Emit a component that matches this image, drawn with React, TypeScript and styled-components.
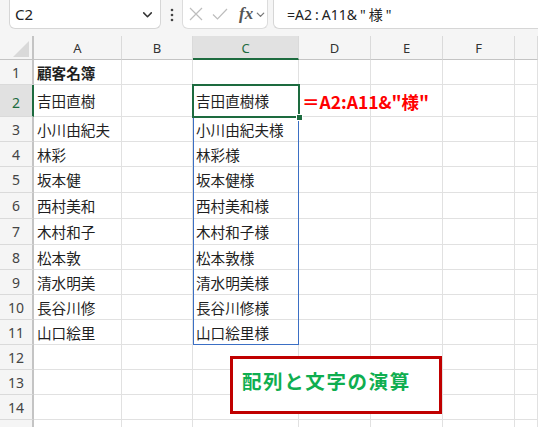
import React from "react";
import styled, { createGlobalStyle } from "styled-components";

const Global = createGlobalStyle`
  * { box-sizing: border-box; }
  html, body { margin: 0; padding: 0; background: #ffffff; overflow: hidden; }
  body { font-family: "Noto Sans", "Noto Sans CJK JP", sans-serif; }
`;

const Page = styled.div`
  width: 538px;
  height: 427px;
  background: #f5f5f5;
  overflow: hidden;
`;

const Toolbar = styled.div`
  height: 36px;
  display: flex;
  align-items: flex-start;
  padding-left: 9px;
`;

const NameBox = styled.div`
  width: 152px;
  height: 29px;
  background: #fff;
  border: 1px solid #d6d6d6;
  border-top: none;
  border-radius: 0 0 6px 6px;
  display: flex;
  align-items: center;
  justify-content: space-between;
  padding: 0 6px 0 5px;
  font-family: "Noto Sans", sans-serif;
  font-size: 15px;
  color: #222;
`;

const Kebab = styled.div`
  width: 21px;
  height: 29px;
  display: flex;
  align-items: center;
  justify-content: center;
`;

const FxBox = styled.div`
  width: 86px;
  height: 29px;
  background: #fff;
  border: 1px solid #dcdcdc;
  border-top: none;
  border-radius: 0 0 6px 6px;
  display: flex;
  align-items: center;
  gap: 9px;
  padding-left: 6px;
`;

const FxLabel = styled.span`
  font-family: "Liberation Serif", serif;
  font-style: italic;
  font-weight: bold;
  font-size: 17px;
  color: #555;
  display: flex;
  align-items: center;
  gap: 2px;
  margin-left: 2px;
`;

const FormulaBox = styled.div`
  flex: 1;
  height: 29px;
  margin-left: 5px;
  background: #fff;
  border: 1px solid #d6d6d6;
  border-top: none;
  border-right: none;
  border-radius: 0 0 0 6px;
  display: flex;
  align-items: center;
  padding-left: 13px;
  font-family: "Noto Sans", "Noto Sans CJK JP", sans-serif;
  font-size: 14px;
  color: #222;
  white-space: pre;
`;

const Wide = styled.span`
  margin: 0 3px;
`;

const Sheet = styled.div`
  position: relative;
  background: #fff;
`;

const COLS = "34px 88px 71px 106px 72px 72px 72px 1fr";

const Row = styled.div<{ $h: number }>`
  display: grid;
  grid-template-columns: ${COLS};
  height: ${(p) => p.$h}px;
`;

const Corner = styled.div`
  background: #f5f5f5;
  border-right: 2px solid #c4c4c4;
  border-bottom: 1px solid #c4c4c4;
  position: relative;
`;

const ColHead = styled.div<{ $active?: boolean }>`
  background: ${(p) => (p.$active ? "#e1e1e1" : "#f5f5f5")};
  border-right: 1px solid #dadada;
  border-bottom: ${(p) => (p.$active ? "2px solid #1d6b3f" : "1px solid #c4c4c4")};
  display: flex;
  align-items: center;
  justify-content: center;
  font-family: "Noto Sans", sans-serif;
  font-size: 13px;
  color: ${(p) => (p.$active ? "#1d6b3f" : "#333")};
  padding-top: 1px;
`;

const RowHead = styled.div<{ $active?: boolean }>`
  background: ${(p) => (p.$active ? "#e1e1e1" : "#f5f5f5")};
  border-right: ${(p) => (p.$active ? "2px solid #1d6b3f" : "2px solid #c4c4c4")};
  border-bottom: 1px solid #dadada;
  display: flex;
  align-items: center;
  justify-content: center;
  font-family: "Noto Sans", sans-serif;
  font-size: 14px;
  color: ${(p) => (p.$active ? "#1d6b3f" : "#444")};
  padding-top: ${(p) => (p.$active ? "4px" : "0")};
`;

const Cell = styled.div<{ $bold?: boolean }>`
  border-right: 1px solid #e1e1e1;
  border-bottom: 1px solid #e1e1e1;
  display: flex;
  align-items: center;
  padding-left: 3px;
  white-space: nowrap;
  overflow: visible;
  font-family: "Noto Sans CJK JP", "Noto Sans", sans-serif;
  font-size: 14.6px;
  font-weight: ${(p) => (p.$bold ? 700 : 400)};
  color: #1f1f1f;
  position: relative;
`;

const RedFormula = styled.span`
  position: absolute;
  left: 3px;
  top: 50%;
  transform: translateY(-50%);
  font-family: "Noto Sans CJK JP", sans-serif;
  font-weight: 700;
  font-size: 17.5px;
  color: #ff0000;
  z-index: 3;
`;

const Spill = styled.div`
  position: absolute;
  left: 193px;
  top: 49px;
  width: 106px;
  height: 260px;
  border: 1px solid #3b6fc4;
  pointer-events: none;
  z-index: 1;
`;

const Selected = styled.div`
  position: absolute;
  left: 192px;
  top: 48px;
  width: 108px;
  height: 34px;
  border: 2px solid #1d6b3f;
  pointer-events: none;
  z-index: 2;
`;

const Handle = styled.div`
  position: absolute;
  right: -5px;
  bottom: -5px;
  width: 7px;
  height: 7px;
  background: #1d6b3f;
  border: 1px solid #fff;
`;

const Callout = styled.div`
  position: absolute;
  left: 230px;
  top: 320px;
  width: 212px;
  height: 58px;
  border: 3px solid #c00000;
  background: #fff;
  padding: 10px 0 0 9px;
  font-family: "Noto Sans CJK JP", sans-serif;
  font-weight: 700;
  font-size: 19.5px;
  letter-spacing: 1.6px;
  line-height: 24px;
  color: #0fae50;
  z-index: 4;
`;

const names = [
  "吉田直樹",
  "小川由紀夫",
  "林彩",
  "坂本健",
  "西村美和",
  "木村和子",
  "松本敦",
  "清水明美",
  "長谷川修",
  "山口絵里",
];

const heights = [25, 32, 25, 25, 26, 26, 26, 25, 25, 25, 25, 25, 25, 25, 25];
const letters = ["A", "B", "C", "D", "E", "F", ""];

const Chevron = ({ color = "#444", size = 12 }: { color?: string; size?: number }) => (
  <svg width={size} height={size} viewBox="0 0 12 12">
    <path d="M2.5 4.5 L6 8 L9.5 4.5" fill="none" stroke={color} strokeWidth="1.4" strokeLinecap="round" strokeLinejoin="round" />
  </svg>
);

export default function App() {
  return (
    <Page>
      <Global />
      <Toolbar>
        <NameBox>
          <span>C2</span>
          <Chevron color="#333" size={13} />
        </NameBox>
        <Kebab>
          <svg width="4" height="14" viewBox="0 0 4 14">
            <circle cx="2" cy="2" r="1.3" fill="#444" />
            <circle cx="2" cy="7" r="1.3" fill="#444" />
            <circle cx="2" cy="12" r="1.3" fill="#444" />
          </svg>
        </Kebab>
        <FxBox>
          <svg width="14" height="14" viewBox="0 0 14 14">
            <path d="M1 1 L13 13 M13 1 L1 13" stroke="#bdbdbd" strokeWidth="1.2" fill="none" />
          </svg>
          <svg width="16" height="14" viewBox="0 0 16 14">
            <path d="M1 7.5 L5.5 12 L15 2" stroke="#bdbdbd" strokeWidth="1.2" fill="none" />
          </svg>
          <FxLabel>
            fx
            <Chevron color="#777" size={11} />
          </FxLabel>
        </FxBox>
        <FormulaBox>
          =A2<Wide>:</Wide>A11&amp;<Wide>"</Wide>様<Wide>"</Wide>
        </FormulaBox>
      </Toolbar>
      <Sheet>
        <Row $h={24}>
          <Corner>
            <svg width="16" height="16" viewBox="0 0 16 16" style={{ position: "absolute", right: 3, bottom: 2 }}>
              <path d="M16 0 L16 16 L0 16 Z" fill="#d9d9d9" />
            </svg>
          </Corner>
          {letters.map((l, i) => (
            <ColHead key={i} $active={l === "C"}>
              {l}
            </ColHead>
          ))}
        </Row>
        {heights.map((h, r) => {
          const rowNo = r + 1;
          const name = rowNo >= 2 && rowNo <= 11 ? names[rowNo - 2] : "";
          return (
            <Row key={rowNo} $h={h}>
              <RowHead $active={rowNo === 2}>{rowNo <= 14 ? rowNo : ""}</RowHead>
              <Cell $bold={rowNo === 1}>{rowNo === 1 ? "顧客名簿" : name}</Cell>
              <Cell />
              <Cell>{name ? name + "様" : ""}</Cell>
              <Cell>{rowNo === 2 && <RedFormula>＝A2:A11&amp;"様"</RedFormula>}</Cell>
              <Cell />
              <Cell />
              <Cell />
            </Row>
          );
        })}
        <Spill />
        <Selected>
          <Handle />
        </Selected>
        <Callout>配列と文字の演算</Callout>
      </Sheet>
    </Page>
  );
}
